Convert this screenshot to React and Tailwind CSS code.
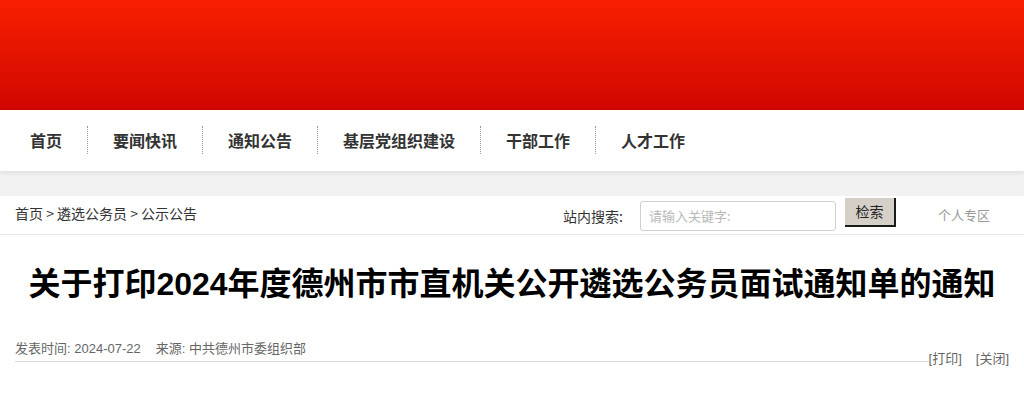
import React from "react";

const navItems = ["首页", "要闻快讯", "通知公告", "基层党组织建设", "干部工作", "人才工作"];

function Header() {
  return <div className="h-[110px] bg-gradient-to-b from-[#f81f00] to-[#d00500]" />;
}

function Nav() {
  return (
    <div className="relative z-10 h-[61px] bg-white shadow-[0_2px_5px_rgba(0,0,0,0.08)] flex items-center pl-[5px]">
      {navItems.map((item, i) => (
        <div
          key={item}
          className={`h-[28px] px-[25px] flex items-center text-[16px] font-bold text-[#333] -mt-[1px] ${
            i < navItems.length - 1 ? "border-r border-dotted border-[#999]" : ""
          }`}
        >
          {item}
        </div>
      ))}
    </div>
  );
}

function SearchBar() {
  return (
    <div className="h-[39px] bg-white border-b border-[#e6e6e6] flex items-center pl-[15px] pr-[34px] text-[14px] text-[#333]">
      <div className="flex-1 -mt-[4px]">首页 &gt; 遴选公务员 &gt; 公示公告</div>
      <span className="mt-[2px]">站内搜索:</span>
      <div className="ml-[17px] mt-[2px] w-[196px] h-[30px] border border-[#cfcfcf] rounded-[3px] flex items-center px-[8px] text-[13px] text-[#b8b8b8]">
        请输入关键字:
      </div>
      <div className="ml-[9px] -mt-[5px] w-[51px] h-[29px] bg-[#d4d0c8] border-r-2 border-b-2 border-[#1a1a1a] flex items-center justify-center text-[14px] text-[#222]">
        检索
      </div>
      <span className="ml-[42px] text-[13px] text-[#999]">个人专区</span>
    </div>
  );
}

export default function App() {
  return (
    <div className="w-[1024px] h-[400px] overflow-hidden bg-white font-['Noto_Sans_CJK_SC',sans-serif]">
      <Header />
      <Nav />
      <div className="h-[25px] bg-[#f2f2f2]" />
      <SearchBar />
      <h1 className="pt-[30px] pb-[33px] text-center text-[32px] leading-[38px] font-bold text-black font-['Liberation_Sans','Noto_Sans_CJK_SC',sans-serif]">
        关于打印2024年度德州市市直机关公开遴选公务员面试通知单的通知
      </h1>
      <div className="flex items-start px-[15px] text-[13px] text-[#666] font-['Liberation_Sans','Noto_Sans_CJK_SC',sans-serif]">
        <div className="flex-1 h-[26px] border-b border-[#dcdcdc] flex items-center">
          <span>发表时间: 2024-07-22</span>
          <span className="ml-[15px]">来源: 中共德州市委组织部</span>
        </div>
        <div className="mt-[13px] flex gap-[14px]">
          <span>[打印]</span>
          <span>[关闭]</span>
        </div>
      </div>
    </div>
  );
}
